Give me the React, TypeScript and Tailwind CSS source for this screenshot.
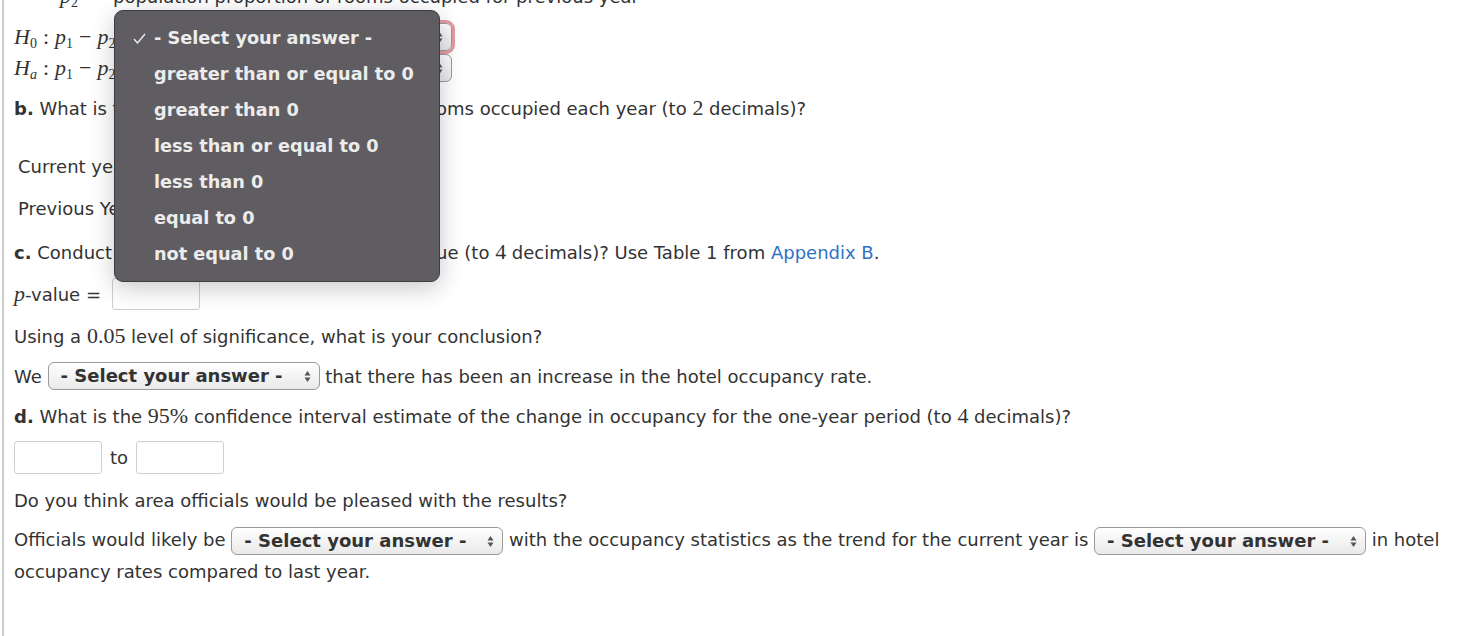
import React from 'react';

const sans = "font-['DejaVu_Sans','Verdana',sans-serif]";
const serif = "font-['Liberation_Serif','Times_New_Roman',serif]";

function M({ children, italic = true }: { children: React.ReactNode; italic?: boolean }) {
  return <span className={`${serif} ${italic ? 'italic' : ''} text-[22px] leading-none`}>{children}</span>;
}

function Sub({ children, italic = false }: { children: React.ReactNode; italic?: boolean }) {
  return <sub className={`text-[14px] ${italic ? 'italic' : 'not-italic'}`}>{children}</sub>;
}

function Arrows() {
  return (
    <svg width="7" height="13" viewBox="0 0 7 13" className="shrink-0">
      <path d="M3.5 1 L6.5 5.5 L0.5 5.5 Z" fill="#555" />
      <path d="M3.5 12 L6.5 7.5 L0.5 7.5 Z" fill="#555" />
    </svg>
  );
}

function Select({ className = '' }: { className?: string }) {
  return (
    <span
      className={`inline-flex items-center justify-between h-[28px] w-[272px] pl-[12px] pr-[8px] rounded-[6px] border border-[#9a9a9a] bg-gradient-to-b from-white to-[#e9e9e9] text-[#333] font-bold text-[18px] leading-none shadow-[inset_0_1px_0_#fff] ${className}`}
    >
      <span>- Select your answer -</span>
      <Arrows />
    </span>
  );
}

function Input({ className = '' }: { className?: string }) {
  return <span className={`inline-block w-[88px] h-[32px] border border-[#cfcfcf] rounded-[3px] bg-white ${className}`} />;
}

const menuItems = [
  '- Select your answer -',
  'greater than or equal to 0',
  'greater than 0',
  'less than or equal to 0',
  'less than 0',
  'equal to 0',
  'not equal to 0',
];

function Menu() {
  return (
    <div className="absolute left-[114px] top-[10px] w-[326px] h-[272px] rounded-[9px] bg-[#5f5d62] border border-[#3d3c40] shadow-[0_6px_24px_rgba(0,0,0,0.22)] pt-[9px]">
      {menuItems.map((item, i) => (
        <div key={item} className="h-[36px] flex items-center text-[#ececec] font-bold text-[17.7px]">
          <span className="w-[39px] flex justify-end pr-[8px]">
            {i === 0 && (
              <svg width="13" height="11" viewBox="0 0 13 11">
                <path d="M1 6 L4.5 10 L12 1" stroke="#ececec" strokeWidth="1.4" fill="none" />
              </svg>
            )}
          </span>
          {item}
        </div>
      ))}
    </div>
  );
}

function Hyp({ a }: { a?: boolean }) {
  return (
    <span className="w-[118px] whitespace-nowrap flex items-center">
      <M>
        H{a ? <Sub italic>a</Sub> : <Sub>0</Sub>}
      </M>
      <M italic={false}>
        <span className="mx-[6px]">:</span>
      </M>
      <M>
        p<Sub>1</Sub>
      </M>
      <M italic={false}>
        <span className="mx-[6px]">−</span>
      </M>
      <M>
        p<Sub>2</Sub>
      </M>
    </span>
  );
}

export default function App() {
  return (
    <div className={`relative h-[636px] w-[1470px] overflow-hidden bg-white ${sans} text-[#333] text-[18px]`}>
      <div className="absolute left-[2px] top-0 bottom-0 w-[2px] bg-[#cdcdcd]" />
      <div className="pl-[14px] flex flex-col">
        <div className="-mt-[18px] h-7 flex items-center whitespace-nowrap">
          <span className="w-[46px]" />
          <M>
            p<Sub>2</Sub>
          </M>
          <span className="ml-[35px]">population proportion of rooms occupied for previous year</span>
        </div>

        <div className="mt-[13px] h-7 flex items-center">
          <Hyp />
          <Select className="w-[320px] border-[#6e62a4] outline outline-[3px] outline-[#e49aa2]" />
        </div>
        <div className="mt-[3px] h-7 flex items-center">
          <Hyp a />
          <Select className="w-[320px]" />
        </div>

        <div className="mt-[12px] h-7 flex items-center whitespace-nowrap">
          <b>b.</b>&nbsp;What is the estimated proportion of hotel rooms occupied each year (to&nbsp;
          <M italic={false}>2</M>&nbsp;decimals)?
        </div>

        <div className="mt-[30px] h-7 flex items-center pl-[4px]">
          <span className="w-[130px]">Current year</span>
          <Input />
        </div>
        <div className="mt-[14px] h-7 flex items-center pl-[4px]">
          <span className="w-[130px]">Previous Year</span>
          <Input />
        </div>

        <div className="mt-[16px] h-7 flex items-center whitespace-nowrap">
          <b>c.</b>&nbsp;Conduct a hypothesis test. What is the&nbsp;<M>p</M>-value (to&nbsp;
          <M italic={false}>4</M>&nbsp;decimals)? Use Table 1 from&nbsp;
          <a className="text-[#2f72c4]">Appendix B</a>.
        </div>

        <div className="mt-[14px] h-7 flex items-center">
          <M>p</M>-value =&nbsp;&nbsp;
          <Input className="h-[30px]" />
        </div>

        <div className="mt-[14px] h-7 flex items-center whitespace-nowrap">
          Using a&nbsp;<M italic={false}>0.05</M>&nbsp;level of significance, what is your conclusion?
        </div>

        <div className="mt-[12px] h-7 flex items-center whitespace-nowrap">
          We&nbsp;
          <Select />
          &nbsp;that there has been an increase in the hotel occupancy rate.
        </div>

        <div className="mt-[12px] h-7 flex items-center whitespace-nowrap">
          <b>d.</b>&nbsp;What is the&nbsp;<M italic={false}>95%</M>&nbsp;confidence interval estimate of the change in occupancy
          for the one-year period (to&nbsp;<M italic={false}>4</M>&nbsp;decimals)?
        </div>

        <div className="mt-[13px] h-7 flex items-center gap-[8px]">
          <Input className="h-[33px]" />
          <span>to</span>
          <Input className="h-[33px]" />
        </div>

        <div className="mt-[15px] h-7 flex items-center">Do you think area officials would be pleased with the results?</div>

        <p className="mt-[10px] leading-[32px] pr-[10px]">
          Officials would likely be <Select className="align-middle" /> with the occupancy statistics as the trend for the
          current year is <Select className="align-middle" /> in hotel occupancy rates compared to last year.
        </p>
      </div>
      <Menu />
    </div>
  );
}
